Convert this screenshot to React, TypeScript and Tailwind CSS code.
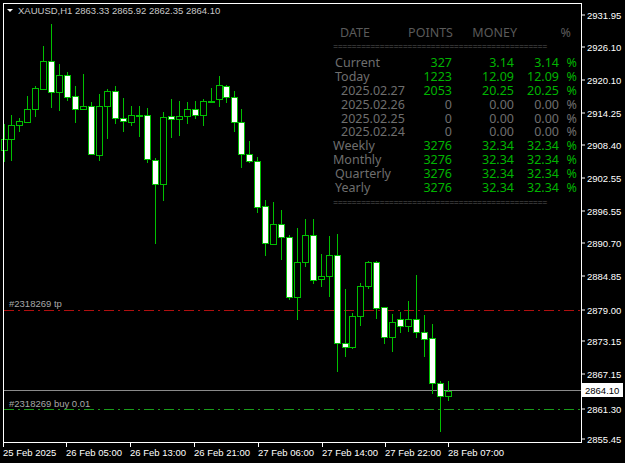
import React from 'react';

// [x, wickTop, wickBottom, bodyTop, bodyBottom, bear]
const candles: [number, number, number, number, number, boolean][] = [
  [4, 124, 162, 139, 150, false],
  [11, 115, 161, 125, 139, false],
  [19, 118, 132, 121, 125, false],
  [27, 96, 122, 109, 122, false],
  [35, 86, 117, 88, 109, false],
  [43, 46, 89, 61, 89, false],
  [51, 24, 108, 61, 92, true],
  [59, 64, 111, 75, 92, false],
  [67, 72, 101, 75, 97, true],
  [75, 86, 123, 96, 109, true],
  [83, 74, 109, 106, 109, false],
  [91, 102, 155, 106, 154, true],
  [99, 94, 161, 106, 155, false],
  [107, 89, 139, 91, 106, false],
  [115, 86, 124, 91, 118, true],
  [123, 98, 132, 118, 121, true],
  [131, 106, 126, 115, 122, false],
  [139, 106, 137, 115, 116, false],
  [147, 108, 163, 115, 159, true],
  [155, 158, 244, 160, 184, true],
  [163, 112, 201, 117, 184, false],
  [171, 99, 138, 116, 119, true],
  [179, 101, 136, 116, 119, false],
  [187, 102, 124, 109, 116, false],
  [195, 101, 119, 109, 115, true],
  [203, 99, 126, 101, 115, false],
  [211, 88, 103, 101, 102, false],
  [219, 76, 107, 85, 99, false],
  [226, 85, 103, 86, 97, true],
  [234, 91, 132, 97, 122, true],
  [241, 109, 168, 122, 154, true],
  [249, 141, 163, 154, 161, true],
  [257, 157, 213, 161, 207, true],
  [265, 200, 256, 206, 243, true],
  [273, 202, 244, 224, 244, false],
  [281, 210, 260, 224, 237, true],
  [289, 235, 300, 237, 297, true],
  [297, 228, 320, 262, 297, false],
  [305, 219, 267, 235, 262, false],
  [313, 219, 284, 235, 280, true],
  [321, 254, 287, 276, 279, false],
  [329, 236, 297, 255, 276, false],
  [337, 234, 372, 255, 343, true],
  [345, 289, 357, 343, 347, true],
  [352, 313, 349, 316, 347, false],
  [360, 283, 326, 286, 316, false],
  [368, 261, 289, 262, 286, false],
  [376, 261, 319, 262, 308, true],
  [384, 307, 344, 307, 337, true],
  [392, 314, 352, 322, 337, false],
  [400, 312, 333, 319, 326, true],
  [408, 301, 332, 319, 326, false],
  [416, 275, 338, 319, 332, true],
  [424, 315, 357, 332, 339, true],
  [432, 324, 394, 338, 383, true],
  [440, 381, 432, 383, 396, true],
  [448, 381, 401, 391, 396, false],
];

const prices: [string, number][] = [
  ['2931.95', 15], ['2926.10', 47], ['2920.10', 80], ['2914.25', 113], ['2908.40', 145],
  ['2902.55', 178], ['2896.55', 211], ['2890.70', 243], ['2884.85', 276], ['2879.00', 310],
  ['2873.15', 341], ['2867.15', 374], ['2861.30', 409], ['2855.45', 439],
];

const times: [string, number][] = [
  ['25 Feb 2025', 3], ['26 Feb 05:00', 66], ['26 Feb 13:00', 130], ['26 Feb 21:00', 194],
  ['27 Feb 06:00', 258], ['27 Feb 14:00', 322], ['27 Feb 22:00', 385], ['28 Feb 07:00', 448],
];

const rows = [
  { label: 'Current', pad: 'pl-[2px]', pts: '327', money: '3.14', pct: '3.14', on: true },
  { label: 'Today', pad: 'pl-[2px]', pts: '1223', money: '12.09', pct: '12.09', on: true },
  { label: '2025.02.27', pad: 'pl-[8px]', pts: '2053', money: '20.25', pct: '20.25', on: true },
  { label: '2025.02.26', pad: 'pl-[8px]', pts: '0', money: '0.00', pct: '0.00', on: false },
  { label: '2025.02.25', pad: 'pl-[8px]', pts: '0', money: '0.00', pct: '0.00', on: false },
  { label: '2025.02.24', pad: 'pl-[8px]', pts: '0', money: '0.00', pct: '0.00', on: false },
  { label: 'Weekly', pad: 'pl-0', pts: '3276', money: '32.34', pct: '32.34', on: true },
  { label: 'Monthly', pad: 'pl-0', pts: '3276', money: '32.34', pct: '32.34', on: true },
  { label: 'Quarterly', pad: 'pl-[2px]', pts: '3276', money: '32.34', pct: '32.34', on: true },
  { label: 'Yearly', pad: 'pl-[2px]', pts: '3276', money: '32.34', pct: '32.34', on: true },
];

const rule = '='.repeat(46);

export default function App() {
  return (
    <div className="relative w-[625px] h-[463px] bg-black overflow-hidden font-['Liberation_Sans',sans-serif]">
      <svg width="625" height="463" className="block" fontFamily="Liberation Sans, sans-serif">
        {/* order lines */}
        <line x1="4" y1="310.5" x2="581" y2="310.5" stroke="#b01010" strokeDasharray="10 4 2 4" />
        <line x1="4" y1="390.5" x2="581" y2="390.5" stroke="#8a8a8a" />
        <line x1="4" y1="409.5" x2="581" y2="409.5" stroke="#1a9a1a" strokeDasharray="10 4 2 4" />
        {candles.map(([x, wt, wb, bt, bb, bear], i) => (
          <g key={i}>
            <line x1={x + 0.5} y1={wt} x2={x + 0.5} y2={wb} stroke="#00c000" />
            <rect
              x={x - 2.5}
              y={bt + 0.5}
              width={6}
              height={Math.max(bb - bt, 1)}
              fill={bear ? '#ffffff' : '#000000'}
              stroke="#00c000"
            />
          </g>
        ))}
        {/* frame */}
        <rect x="3.5" y="3.5" width="578" height="439" fill="none" stroke="#ffffff" />
        {prices.map(([p, y]) => (
          <g key={p}>
            <line x1="581" y1={y} x2="585" y2={y} stroke="#fff" />
            <text x="587" y={y + 3.5} fill="#fff" fontSize="9.5">{p}</text>
          </g>
        ))}
        <rect x="582.5" y="383.5" width="40" height="13" fill="#fff" stroke="#fff" />
        <text x="585" y="394" fill="#000" fontSize="9.5">2864.10</text>
        {times.map(([t, x]) => (
          <g key={t}>
            <line x1={x + 0.5} y1="443" x2={x + 0.5} y2="447" stroke="#fff" />
            <text x={x} y="456" fill="#fff" fontSize="9.5">{t}</text>
          </g>
        ))}
        <text x="9" y="307" fill="#a8a8a8" fontSize="9.5">#2318269 tp</text>
        <text x="9" y="407" fill="#a8a8a8" fontSize="9.5">#2318269 buy 0.01</text>
        <polygon points="7,9 13,9 10,12" fill="#fff" />
        <text x="18" y="14" fill="#c8c8c8" fontSize="9.5">XAUUSD,H1  2863.33 2865.92 2862.35 2864.10</text>
      </svg>

      {/* stats panel overlay */}
      <div className="absolute left-[333px] top-[26px] w-[246px] text-[12.5px] leading-[14px]">
        <div className="flex text-[#5a5a5a] h-[16px]">
          <span className="w-[44px] pl-[7px]">DATE</span>
          <span className="w-[76px] text-right">POINTS</span>
          <span className="w-[64px] text-right">MONEY</span>
          <span className="flex-1 text-right pr-[8px]">%</span>
        </div>
        <div className="text-[#5a5a5a] text-[9px] leading-[10px] whitespace-nowrap h-[10px] tracking-[-0.5px]">
          {rule}
        </div>
        <div className="mt-[4px]">
          {rows.map((r) => (
            <div key={r.label} className="flex h-[13.9px] leading-[13.9px]">
              <span className={`w-[78px] text-[#6e6e6e] ${r.pad}`}>{r.label}</span>
              <span className={`w-[41px] text-right ${r.on ? 'text-[#00b400]' : 'text-[#6e6e6e]'}`}>{r.pts}</span>
              <span className={`w-[62px] text-right ${r.on ? 'text-[#00b400]' : 'text-[#6e6e6e]'}`}>{r.money}</span>
              <span className={`w-[45px] text-right ${r.on ? 'text-[#00b400]' : 'text-[#6e6e6e]'}`}>{r.pct}</span>
              <span className={`w-[18px] text-right ${r.on ? 'text-[#00b400]' : 'text-[#6e6e6e]'}`}>%</span>
            </div>
          ))}
        </div>
        <div className="mt-[3px] text-[#5a5a5a] text-[9px] leading-[10px] whitespace-nowrap h-[10px] tracking-[-0.5px]">
          {rule}
        </div>
      </div>
    </div>
  );
}
